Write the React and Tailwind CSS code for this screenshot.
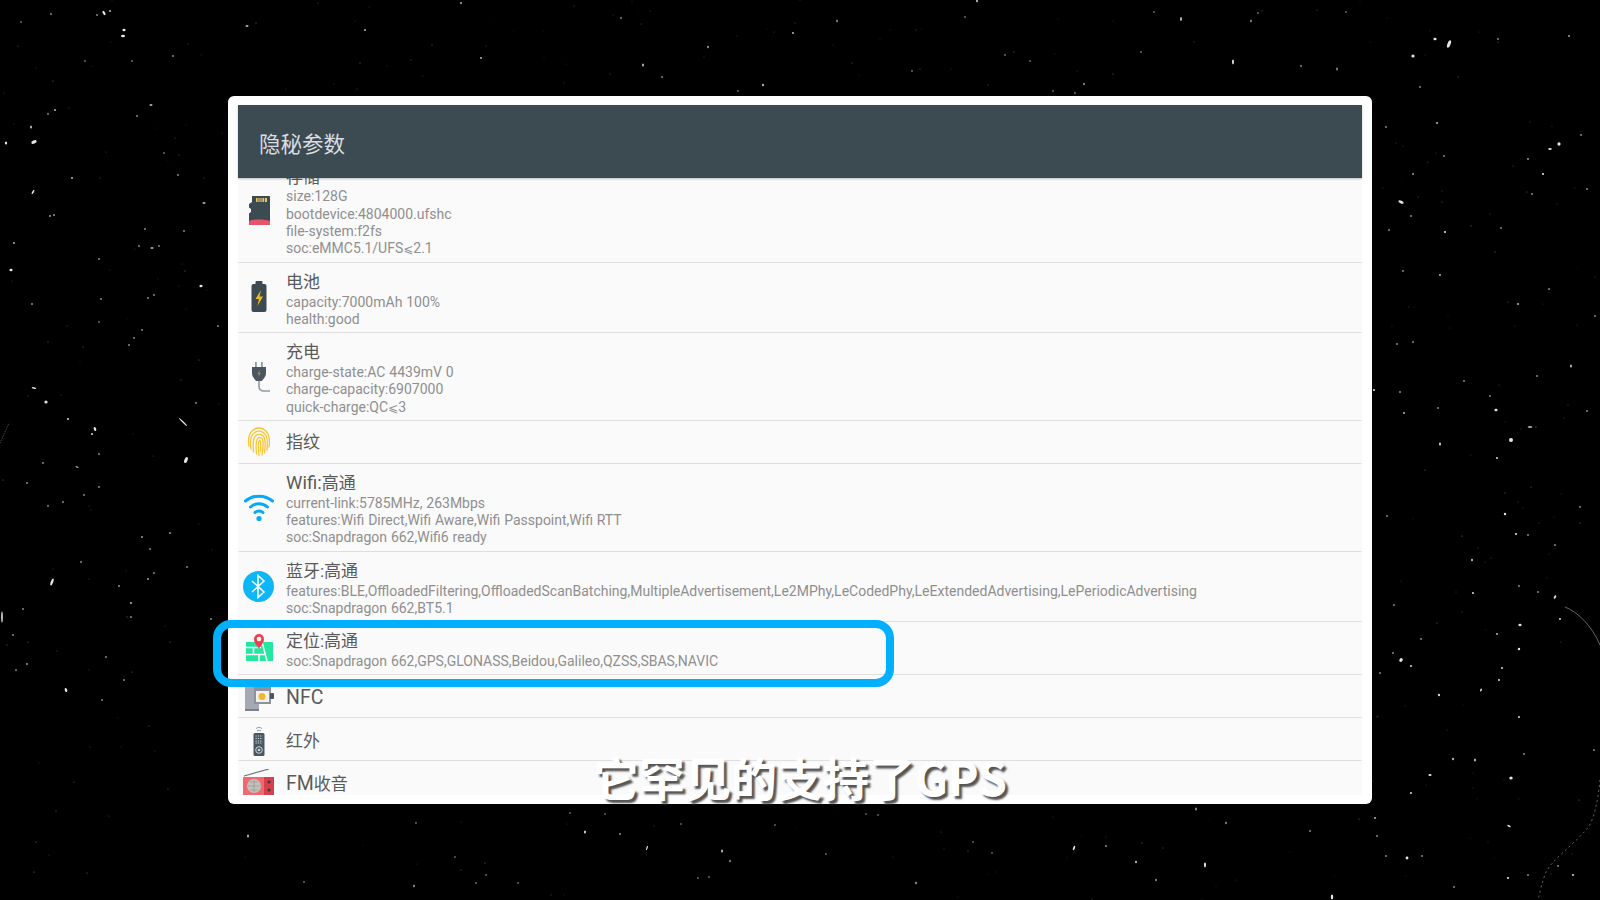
import React from "react";

// [x, y, rx, ry, angle]
const stars = [
  [104,13,1.5,3,-30],[110,11,1.5,1],[97,15,1,1],[124,30,2,1.5],[123,36,2.5,1.5],[51,14,1,1],[21,22,.8,.8],[173,56,1,1],[132,61,.8,.8],
  [151,105,2,1],[34,142,3.5,2,-20],[6,143,1.5,2],[55,110,1.5,1],[31,127,1,2],[72,178,1.5,1],[33,192,1,3,30],[137,116,1,1],[164,153,.8,.8],
  [247,26,2,1],[85,61,.8,.8],[48,114,1,1],[178,175,1,1],[204,203,2,1],[50,216,1.2,1],[54,215,1.2,1],[14,243,1.3,1],[11,270,2,1.5],
  [139,246,1,1],[152,248,2,1],[159,246,1,1],[201,286,2,1.5],[99,259,1,1],[145,229,1,1],[184,231,1,1],[148,298,1,1],[154,295,1,1],[101,299,1,1],
  [32,304,1,1],[34,388,3,1,15],[46,402,2,2],[68,419,1.2,1.2],[95,429,1.5,2.5,-20],[92,434,1.2,1.2],[99,454,1,1],[183,422,.8,7,-45],
  [186,460,2,4,20],[27,483,1,1],[48,506,1,1],[170,533,1.2,1],[142,537,1.2,1],[52,582,1.5,4.5,20],[148,579,1.2,1],[2,617,1,7],[131,603,1.5,.8],
  [119,586,1,1],[27,664,1.2,1],[66,690,1.5,2.5,-20],[16,670,1,1],[124,680,1,1],[102,700,1,1],[106,657,1,1],[211,619,1,1],[187,567,1,1],
  [99,487,1,1],[63,502,1,1],[84,495,1,1],[142,330,1,1],[134,338,1,1],[129,345,1,1],[196,403,1,1],[99,322,.8,.8],[218,326,1,1],[43,463,1,1],
  [77,467,2,.6,20],[150,549,1,1],[154,573,1,1],[81,562,1,1],[131,617,1,1],[23,609,1,1],[13,635,1,1],
  [1435,39,2,1.5],[1449,44,2,5,20],[1413,56,2,2],[1498,39,1,1],[1569,36,1.2,1],[1437,123,1.5,1],[1559,144,2,2.2],[1550,149,2.2,1.2],
  [1528,159,1.2,.8],[1543,174,1.3,1.3],[1532,194,1,1],[1401,202,3.5,1.8,25],[1413,174,1.2,1],[1445,232,1.3,1.3],[1411,216,1,1],[1444,156,1,1],
  [1420,87,1,1],[1386,127,1,1],[1581,135,1,1],[1587,189,1,1],[1501,228,1,1],[1389,230,1,1],[1440,275,1,1.2],[1403,271,1,1],[1518,304,1.5,1],
  [1549,289,1,1],[1595,316,1,1],[1571,366,1,2],[1537,376,1,1],[1374,390,1.3,1.3],[1400,392,1,1],[1404,413,1.5,1],[1438,408,1,1],[1496,410,2,1.5],
  [1530,427,3,1],[1511,440,2.5,2.5],[1440,444,1.2,2],[1490,396,1,1],[1587,411,1,1],[1464,381,1,1],[1397,344,1,1],[1413,342,1,1],
  [1497,458,1.2,1.2],[1505,514,1.5,1.5],[1516,534,1.3,1.3],[1580,507,1,1],[1387,516,1,1],[1528,535,1,1],[1555,545,1,1],[1472,560,1,1.5],
  [1473,593,1.2,1.2],[1555,597,1.2,2.5,30],[1538,592,1,1],[1519,586,1,1],[1520,625,2,1.5],[1560,619,1.2,1.2],[1497,634,1.5,1],[1394,605,1,1],
  [1401,660,2,2.5,40],[1411,666,1.2,1.2],[1393,653,1,1],[1502,668,1.2,1.2],[1499,680,1.2,1.2],[1439,695,1.3,1.6],[1481,690,1,2,20],[1519,717,1.2,1.2],
  [1475,760,1,2],[1453,759,1,1.5],[1430,775,2,1.2],[1511,778,2.2,2],[1411,793,1.2,1.2],[1375,818,1.5,1],[1509,826,2.5,1,30],[1407,858,1.8,1.8],
  [1377,836,1,1],[1386,856,1,1],[1422,856,1,1],[1508,878,1.4,1.4],[1528,875,1,1],[1573,875,1.2,1.2],[1454,887,1,1],[1380,673,1,1],[1421,639,1,1],
  [1519,649,1.5,1.5],[1524,754,1,1],[1594,750,1,1],[1558,866,1,1],
  [365,30,1,1.2],[481,58,1,1.2],[643,65,1,2],[662,77,1,1],[763,85,1,1.5],[793,33,1,1.2],[837,21,.7,1.5],[708,47,.8,1.5],[977,1,1,1.5],[1181,19,1,2.5],
  [1233,62,1.2,3],[461,3,.8,1.5],[621,18,.7,1.2],[1030,61,.8,1],[1005,55,.8,1],[1346,12,.8,1],[1301,66,1,1],[1337,69,.7,2],[912,71,.8,1],[1084,84,.7,1.5],
  [738,91,.8,1],[1141,52,.8,1],[1251,21,.7,1.5],[1258,13,.8,1],[1154,12,.8,1],[965,17,.8,1],[1053,91,.8,1],[1075,93,.8,1],
  [248,836,1,2],[585,832,1.2,2],[620,834,.8,1.2],[647,848,.8,3,20],[722,851,1,2],[730,861,.7,1.5],[1074,848,1.2,3,20],[1106,846,.8,1.2],[1136,862,1,1.5],
  [1205,865,1.3,3],[1196,809,.8,2],[1226,823,.7,1.5],[1310,831,.7,1.2],[1332,897,1.5,3],[826,854,.8,1],[476,883,.8,1],[518,883,.8,1],[414,886,.8,1.5],
  [304,882,.8,1],[698,878,.8,1],[709,877,.8,1],[916,883,.8,1.5],[1156,880,.7,1.5],[486,875,.8,1],[416,823,.8,1],[570,813,.7,1],[605,814,.7,1],
  [681,824,.7,1],[775,825,.7,1],[866,814,.7,1],[878,815,.7,1],[973,842,.7,1],[992,853,.7,1],[455,857,.7,1],
];

// faint dust, same every load
const dust = [];
let seed = 12345;
const rnd = () => {
  seed = (seed * 16807) % 2147483647;
  return seed / 2147483647;
};
for (let i = 0; i < 520; i++) {
  dust.push([Math.round(rnd() * 1600), Math.round(rnd() * 900), 0.35 + rnd() * 0.25, 0.2 + rnd() * 0.3]);
}

const Starfield = () => (
  <svg className="absolute inset-0" width="1600" height="900" viewBox="0 0 1600 900">
    {dust.map((d, i) => (
      <circle key={i} cx={d[0]} cy={d[1]} r={d[2]} fill="#fff" opacity={d[3]} />
    ))}
    {stars.map((s, i) => (
      <ellipse key={i} cx={s[0]} cy={s[1]} rx={s[2] * 0.8} ry={s[3] * 0.8} fill="#fff" opacity="0.9" transform={s[4] ? `rotate(${s[4]} ${s[0]} ${s[1]})` : undefined} />
    ))}
    <path d="M1565 607C1578 612 1592 626 1600 645" stroke="#666" strokeWidth="1" fill="none" />
    <path d="M1600 780C1598 800 1594 822 1586 830C1572 846 1552 860 1546 872C1542 882 1540 892 1538 900" stroke="#666" strokeWidth="1" strokeDasharray="2 3" fill="none" />
    <path d="M0 443L9 423" stroke="#555" strokeWidth="1" strokeDasharray="1 1" />
  </svg>
);

const SdIcon = () => (
  <svg width="30" height="30" viewBox="0 0 30 30">
    <path d="M8 1H26V27H5V18.5L7 17V14L5 12.5V9L8 7Z" fill="#3c4a52" />
    <path d="M5 26C9 24 21 24 26 26V30H5Z" fill="#e8536c" />
    <rect x="12" y="3" width="11" height="4" fill="#e9c46a" />
    <path d="M14 3V7M16 3V7M18 3V7M20.5 3V7" stroke="#3c4a52" strokeWidth=".8" />
  </svg>
);

const BatteryIcon = () => (
  <svg width="30" height="32" viewBox="0 0 30 32">
    <rect x="11.5" y="0" width="7" height="4" rx="1" fill="#3c4a52" />
    <rect x="7.500" y="3" width="15" height="28" rx="2" fill="#3c4a52" />
    <path d="M17 9L11.5 18H15L13.5 25L19 15.5H15.5Z" fill="#f5b81f" />
  </svg>
);

const PlugIcon = () => (
  <svg width="30" height="30" viewBox="0 0 30 30">
    <path d="M15 19V24C15 27 17 29 20 29H26" stroke="#8d9ba3" strokeWidth="1.6" fill="none" />
    <rect x="11" y="0" width="1.8" height="6" fill="#8d9ba3" />
    <rect x="17" y="0" width="1.8" height="6" fill="#8d9ba3" />
    <path d="M8 5H22V11C22 15 19 17 18 19H12C11 17 8 15 8 11Z" fill="#4a5761" />
    <path d="M15.5 8L13.6 12H15L14.4 15L16.6 11H15.2Z" fill="#d98a2b" />
  </svg>
);

const FingerIcon = () => (
  <svg width="30" height="30" viewBox="0 0 30 30" fill="none" stroke="#f8c534" strokeWidth="1.3" strokeLinecap="round">
    <path d="M5 19C4 13 4 8 8 4C12 0 18 0 22 4C25.500 8 26 14 25 20" />
    <path d="M7 22C6 15 6 9 10 6C13 3 18 4 20.500 6.500C24 10 23.500 16 23 23" />
    <path d="M9.500 25C9 18 8.500 11 12 8.500C14.500 6.500 18 7.500 19.500 9.500C21.500 12 21.500 18 20.500 26" />
    <path d="M12.500 27C12 20 11 14 14 11C15.500 10 17.500 10.500 18.500 12.500C19.500 15 19 22 18 28" />
    <path d="M15 28.500C14.500 23 13.500 16 15.500 13.500C17 13 17 18 16.500 24" />
  </svg>
);

const WifiIcon = () => (
  <svg className="mt-[2px]" width="30" height="28" viewBox="0 0 30 28" fill="none" stroke="#06a9f4" strokeWidth="3" strokeLinecap="round">
    <path d="M1.500 7C9 0.500 21 0.500 28.500 7" />
    <path d="M6.500 13C11.500 8.500 18.500 8.500 23.500 13" />
    <path d="M11 18.500C13 16.500 17 16.500 19 18.500" />
    <circle cx="15" cy="24.500" r="2.600" fill="#06a9f4" stroke="none" />
  </svg>
);

const BluetoothIcon = () => (
  <svg width="31" height="31" viewBox="0 0 31 31">
    <circle cx="15.500" cy="15.500" r="15.500" fill="#0db6f6" />
    <path d="M9 10L21 21L15 26.500V4.500L21 10L9 21" stroke="#fff" strokeWidth="1.500" fill="none" />
  </svg>
);

const MapIcon = () => (
  <svg width="30" height="30" viewBox="0 0 30 30">
    <rect x="2" y="9" width="27" height="19" fill="#23e6a0" />
    <path d="M2 14.500H17M2 21.500H22M9.500 14.500V21.500M15 28V21.500M18 9L23 28" stroke="#fafafa" strokeWidth="1.600" fill="none" />
    <path d="M15 16C13 12 10 10 10 6A5 5 0 0 1 20 6C20 10 17 12 15 16Z" fill="#ef3f4f" />
    <circle cx="15" cy="6" r="2.300" fill="#fff" />
  </svg>
);

const NfcIcon = () => (
  <svg width="30" height="30" viewBox="0 0 30 30">
    <rect x="1" y="0" width="14" height="26" fill="#a4a9b4" />
    <rect x="1" y="26" width="14" height="2" fill="#7b808a" />
    <rect x="10" y="4" width="17" height="17" fill="#8d929c" />
    <rect x="12" y="8" width="13" height="11" fill="#f1f1ee" />
    <circle cx="18" cy="13.500" r="3.500" fill="#f3b62e" />
    <rect x="26" y="10" width="4" height="6" rx="1" fill="#4a5761" />
  </svg>
);

const RemoteIcon = () => (
  <svg width="30" height="30" viewBox="0 0 30 30">
    <path d="M12 2.500C14 1 16 1 18 2.500M13 5C14.500 4 15.500 4 17 5" stroke="#8d9ba3" strokeWidth="1" fill="none" />
    <rect x="9.500" y="7" width="11" height="23" rx="1.500" fill="#4a5761" />
    <path d="M11.500 10H18.500M11.500 12.500H18.500M11.500 15H18.500M11.500 17H18.500" stroke="#cfd5d9" strokeWidth="1" strokeDasharray="1.300 1" />
    <circle cx="15" cy="24" r="3.300" fill="none" stroke="#cfd5d9" strokeWidth="1" />
    <circle cx="15" cy="24" r="1.300" fill="#cfd5d9" />
  </svg>
);

const RadioIcon = () => (
  <svg width="31" height="30" viewBox="0 0 31 30">
    <path d="M1 7L26 0" stroke="#6b7780" strokeWidth="1.200" />
    <rect x="0" y="8" width="31" height="18" fill="#ef6a70" />
    <rect x="21" y="8" width="10" height="18" fill="#d93f4b" />
    <circle cx="11" cy="17" r="7" fill="#c5c0bb" />
    <path d="M5 17H17M11 11V23M7 13H15M7 21H15" stroke="#9a9692" strokeWidth=".7" />
    <circle cx="26" cy="13" r="1.600" fill="#333d44" />
    <circle cx="26" cy="21" r="1.600" fill="#333d44" />
  </svg>
);

const Le = () => <span className="font-['Noto_Sans_CJK_SC','DejaVu_Sans',sans-serif] text-[12px] leading-none">⩽</span>;

const rows = [
  { id: "storage", title: "存储", icon: <SdIcon />, first: true, lines: ["size:128G", "bootdevice:4804000.ufshc", "file-system:f2fs", <>soc:eMMC5.1/UFS<Le />2.1</>] },
  { id: "battery", title: "电池", icon: <BatteryIcon />, lines: ["capacity:7000mAh 100%", "health:good"] },
  { id: "charge", title: "充电", icon: <PlugIcon />, lines: ["charge-state:AC 4439mV 0", "charge-capacity:6907000", <>quick-charge:QC<Le />3</>] },
  { id: "finger", title: "指纹", icon: <FingerIcon /> },
  { id: "wifi", title: <><span className="text-[18.5px]">Wifi:</span>高通</>, icon: <WifiIcon />, lines: ["current-link:5785MHz, 263Mbps", "features:Wifi Direct,Wifi Aware,Wifi Passpoint,Wifi RTT", "soc:Snapdragon 662,Wifi6 ready"] },
  { id: "bt", title: "蓝牙:高通", icon: <BluetoothIcon />, lines: ["features:BLE,OffloadedFiltering,OffloadedScanBatching,MultipleAdvertisement,Le2MPhy,LeCodedPhy,LeExtendedAdvertising,LePeriodicAdvertising", "soc:Snapdragon 662,BT5.1"] },
  { id: "gps", title: "定位:高通", icon: <MapIcon />, lines: ["soc:Snapdragon 662,GPS,GLONASS,Beidou,Galileo,QZSS,SBAS,NAVIC"] },
  { id: "nfc", low: true, title: <span className="text-[19.5px]">NFC</span>, icon: <NfcIcon /> },
  { id: "ir", low: true, title: "红外", icon: <RemoteIcon /> },
  { id: "fm", low: true, title: <><span className="text-[19.5px]">FM</span>收音</>, icon: <RadioIcon /> },
];

const Row = ({ row }) => {
  const single = !row.lines;
  return (
    <div className={`flex items-center border-b border-[#dfdfdf] ${single ? "h-[43px]" : "py-2"} ${row.low ? "pt-[4px]" : ""} ${row.first ? "-mt-[20.4px]" : ""}`}>
      <div className="ml-[5px] w-[31px] shrink-0 flex justify-center">{row.icon}</div>
      <div className="ml-[12px]">
        <div className={`text-[17px] leading-[18.8px] text-[#5a5a5a] ${single ? "" : "translate-y-[1.5px]"}`}>{row.title}</div>
        {row.lines &&
          row.lines.map((line, i) => (
            <div key={i} className="h-[17.33px] text-[14px] leading-[17.33px] text-[#8f8f8f] whitespace-nowrap translate-y-[3.5px] [word-spacing:0.4px]">
              {line}
            </div>
          ))}
      </div>
    </div>
  );
};

const App = () => {
  return (
    <div className="relative w-[1600px] h-[900px] overflow-hidden bg-black font-['Roboto','Noto_Sans_CJK_SC',sans-serif]">
      <Starfield />
      <div className="relative flex justify-center pt-[96px]">
        <div className="w-[1144px] h-[708px] bg-white rounded-[6px] py-[9px] px-[10px] flex flex-col">
          <div className="h-[73px] shrink-0 bg-[#3c4a52] flex items-center pl-[21px] pt-[7px] text-[21.5px] text-[#d8dde0] shadow-[0_1px_2px_rgba(0,0,0,0.25)] relative z-10">
            隐秘参数
          </div>
          <div className="flex-1 overflow-hidden bg-[#fafafa]">
            {rows.map((row) => (
              <Row key={row.id} row={row} />
            ))}
          </div>
        </div>
      </div>
      {/* highlight around the location row */}
      <div className="absolute left-[212.5px] top-[620px] w-[681px] h-[67px] rounded-[18px] border-[8px] border-[#00b0ff]" />
      {/* video subtitle */}
      <div className="absolute left-0 right-0 top-[744px] text-center text-[46px] leading-[64px] font-bold text-white font-['Noto_Sans_CJK_SC',sans-serif] [text-shadow:3px_3px_2px_#555]">
        它罕见的支持了GPS
      </div>
    </div>
  );
};

export default App;
